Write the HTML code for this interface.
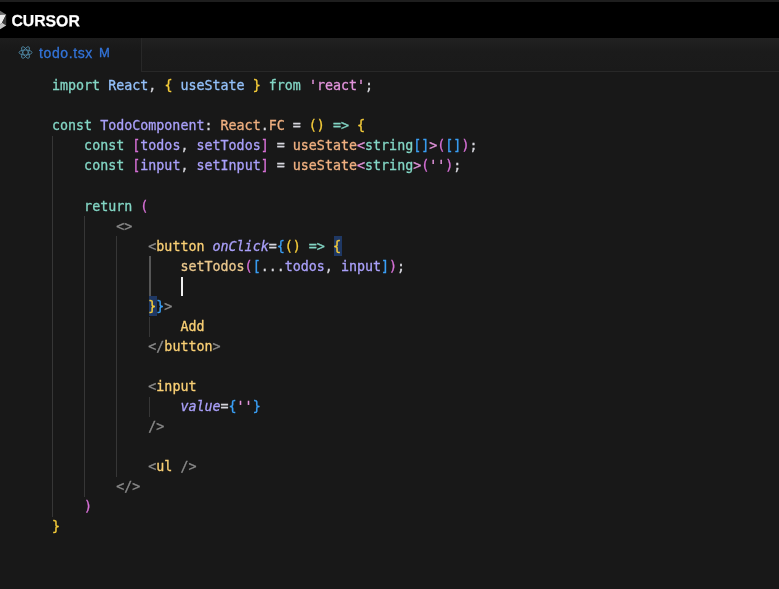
<!DOCTYPE html>
<html lang="en">
<head>
<meta charset="utf-8">
<title>todo.tsx - Cursor</title>
<style>
html,body{margin:0;padding:0;}
body{width:779px;height:589px;overflow:hidden;background:#181818;position:relative;font-family:"Liberation Sans",sans-serif;}
#topstripe{position:absolute;left:0;top:0;width:779px;height:2px;background:#1e1e1e;}
#titlebar{position:absolute;left:0;top:2px;width:779px;height:36px;background:#000;}
#brand{fill:#fff;stroke:#fff;stroke-width:0.25px;font-family:"Liberation Sans",sans-serif;font-weight:bold;font-size:15.9px;}
#logo{position:absolute;left:0;top:0;will-change:transform;}
#tabbar{position:absolute;left:0;top:38px;width:779px;height:34px;background:linear-gradient(#222222,#1b1b1b 40%,#1a1a1a);}
#tabbar .line{position:absolute;left:142px;right:0;bottom:0;height:1px;background:#282828;}
#tab{position:absolute;left:0;top:0;width:142px;height:34px;background:linear-gradient(#1d1d1d,#181818 40%);border-right:1px solid #282828;box-sizing:border-box;}
#tab .name{position:absolute;left:39px;top:7px;font-size:14px;line-height:16px;color:#3374d9;white-space:nowrap;letter-spacing:0.62px;-webkit-text-stroke:0.3px #3374d9;}
#tab .mod{position:absolute;left:99px;top:7px;font-size:13px;line-height:16px;color:#3374d9;-webkit-text-stroke:0.3px #3374d9;}
#tab svg{position:absolute;left:17.6px;top:7px;}
#editor{position:absolute;left:0;top:76px;width:779px;height:513px;will-change:transform;}
#tab .name,#tab .mod{will-change:transform;}
.l{position:absolute;left:52px;height:20px;line-height:20px;white-space:pre;font-family:"DejaVu Sans Mono","Liberation Mono",monospace;font-size:13.33px;color:#d6d6dd;-webkit-text-stroke:0.3px;}
.g{position:absolute;width:1px;background:#363636;}
.ga{background:#565656;width:1.5px;}
.k{color:#83d6c5;}
.b{color:#94c1fa;}
.v{color:#aaa0fa;}
.f{color:#efb080;}
.f2{color:#ebc88d;}
.s{color:#e394dc;}
.y{color:#f8c762;}
.t{color:#fad075;}
.p{color:#8b8b8b;}
.b1{color:#f5cc3a;}
.b2{color:#d670d6;}
.b3{color:#3a9ff5;}
.i{font-style:italic;}
.mb{position:absolute;width:8.2px;height:20.2px;background:#1f3864;}
#caret{position:absolute;left:181px;top:200.6px;width:2px;height:19.3px;background:#f0f0f0;}
</style>
</head>
<body>
<div id="topstripe"></div>
<div id="titlebar">
  <svg id="logo" width="90" height="36" viewBox="0 0 90 36">
    <polygon points="0,8.8 6.2,12.4 0,13.2" fill="#6a6a6a"/>
    <polygon points="0,12.9 6.2,12.4 2.1,20.7 0,22.6" fill="#ececec"/>
    <polygon points="6.2,12.4 6.2,23.5 2.1,20.7" fill="#3c3c3c"/>
    <polygon points="0,22.6 2.1,20.7 6.2,23.5 0,27.3" fill="#c6c6c6"/>
    <text id="brand" transform="translate(11.4,24.1) rotate(0.05)" x="0" y="0" textLength="68.4" lengthAdjust="spacingAndGlyphs">CURSOR</text>
  </svg>
</div>
<div id="tabbar">
  <div class="line"></div>
  <div id="tab">
    <svg width="15" height="15" viewBox="0 0 16 16" fill="none" stroke="#4f87a3" stroke-width="0.95">
      <ellipse cx="8" cy="8" rx="6.9" ry="2.7"/>
      <ellipse cx="8" cy="8" rx="6.9" ry="2.7" transform="rotate(60 8 8)"/>
      <ellipse cx="8" cy="8" rx="6.9" ry="2.7" transform="rotate(120 8 8)"/>
    </svg>
    <span class="name">todo.tsx</span>
    <span class="mod">M</span>
  </div>
</div>
<div id="editor">
  <div class="g" style="left:52px;top:60px;height:381px"></div>
  <div class="g" style="left:84px;top:140px;height:281px"></div>
  <div class="g" style="left:116px;top:160px;height:241px"></div>
  <div class="g ga" style="left:149px;top:180px;height:41px"></div>
  <div class="g" style="left:149px;top:241px;height:20px"></div>
  <div class="g" style="left:149px;top:321px;height:20px"></div>
  <div class="mb" style="left:333.7px;top:160.1px"></div>
  <div class="mb" style="left:148.8px;top:220.3px"></div>

  <div class="l" style="top:0px"><span class="k">import</span> <span class="b">React</span>, <span class="b1">{</span> <span class="b">useState</span> <span class="b1">}</span> <span class="k">from</span> <span class="s">'react'</span>;</div>
  <div class="l" style="top:40px"><span class="k">const</span> <span class="v">TodoComponent</span>: <span class="f">React</span>.<span class="f">FC</span> = <span class="b1">()</span> <span class="k">=&gt;</span> <span class="b1">{</span></div>
  <div class="l" style="top:60px">    <span class="k">const</span> <span class="b2">[</span><span class="v">todos</span>, <span class="v">setTodos</span><span class="b2">]</span> = <span class="f">useState</span><span class="s">&lt;</span><span class="k">string</span><span class="b3">[]</span><span class="s">&gt;</span><span class="b2">(</span><span class="b3">[]</span><span class="b2">)</span>;</div>
  <div class="l" style="top:80px">    <span class="k">const</span> <span class="b2">[</span><span class="v">input</span>, <span class="v">setInput</span><span class="b2">]</span> = <span class="f">useState</span><span class="s">&lt;</span><span class="k">string</span><span class="s">&gt;</span><span class="b2">(</span><span class="s">''</span><span class="b2">)</span>;</div>
  <div class="l" style="top:121px">    <span class="k">return</span> <span class="b2">(</span></div>
  <div class="l" style="top:141px">        <span class="p">&lt;&gt;</span></div>
  <div class="l" style="top:161px">            <span class="p">&lt;</span><span class="t">button</span> <span class="v i">onClick</span>=<span class="b3">{</span><span class="b1">()</span> <span class="k">=&gt;</span> <span class="b1">{</span></div>
  <div class="l" style="top:181px">                <span class="f2">setTodos</span><span class="b2">(</span><span class="b3">[</span>...<span class="v">todos</span>, <span class="v">input</span><span class="b3">]</span><span class="b2">)</span>;</div>
  <div class="l" style="top:221px">            <span class="b1">}</span><span class="b3">}</span><span class="p">&gt;</span></div>
  <div class="l" style="top:241px">                <span class="t">Add</span></div>
  <div class="l" style="top:261px">            <span class="p">&lt;/</span><span class="t">button</span><span class="p">&gt;</span></div>
  <div class="l" style="top:301px">            <span class="p">&lt;</span><span class="t">input</span></div>
  <div class="l" style="top:321px">                <span class="v i">value</span>=<span class="b3">{</span><span class="s">''</span><span class="b3">}</span></div>
  <div class="l" style="top:341px">            <span class="p">/&gt;</span></div>
  <div class="l" style="top:381px">            <span class="p">&lt;</span><span class="t">ul</span> <span class="p">/&gt;</span></div>
  <div class="l" style="top:401px">        <span class="p">&lt;/&gt;</span></div>
  <div class="l" style="top:421px">    <span class="b2">)</span></div>
  <div class="l" style="top:441px"><span class="b1">}</span></div>
  <div id="caret"></div>
</div>
</body>
</html>
